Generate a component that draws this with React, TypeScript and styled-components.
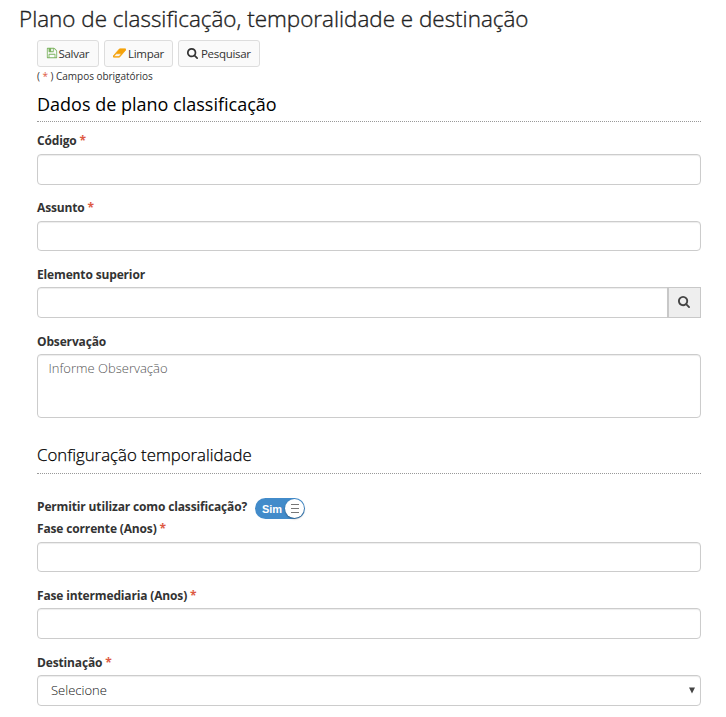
import React from "react";
import styled, { createGlobalStyle } from "styled-components";

const Global = createGlobalStyle`
  *{box-sizing:border-box}
  body{margin:0;background:#fff;font-family:"Open Sans",sans-serif;font-size:13px;color:#333;overflow:hidden}
`;
const Page = styled.main`width:726px;height:717px;padding:0 25px 0 37px;`;
const Title = styled.h1`
  margin:0 0 0 -18px;font-size:22.45px;font-weight:300;line-height:37px;height:39px;white-space:nowrap;color:#222;
  -webkit-text-stroke:.35px #222;
`;
const Toolbar = styled.div`display:flex;gap:5px;height:28px;margin-top:1px;`;
const Button = styled.button<{ $w: number; $gap: number }>`
  width:${p => p.$w}px;height:27px;padding:0 0 1px 8px;display:flex;align-items:center;gap:${p => p.$gap}px;
  border:1px solid #ddd;border-radius:3px;background:#fafafa;
  font:11.5px "Open Sans",sans-serif;color:#333;letter-spacing:-.3px;
`;
const Note = styled.p`margin:0;height:18px;line-height:16px;font-size:10px;letter-spacing:-.03px;`;
const Star = styled.span`color:#dd5a43;`;
const Heading = styled.h2<{ $h: number; $size: number; $light?: boolean }>`
  margin:0;height:${p => p.$h}px;line-height:36px;font-size:${p => p.$size}px;font-weight:${p => p.$light ? 300 : 400};
  color:#000;border-bottom:1px dotted #999;-webkit-text-stroke:${p => p.$light ? ".25px #000" : "0"};
`;
const Field = styled.div<{ $top: number }>`margin-top:${p => p.$top}px;`;
const Label = styled.label<{ $h?: number }>`
  display:block;height:${p => p.$h ?? 22}px;line-height:18px;font-size:12px;font-weight:700;letter-spacing:-.15px;
`;
const Input = styled.input<{ $h?: number }>`
  display:block;width:100%;height:${p => p.$h ?? 31}px;padding:0 11px;border:1px solid #ccc;border-radius:4px;
  background:#fff;box-shadow:inset 0 1px 1px rgba(0,0,0,.075);outline:none;
`;
const TextArea = styled.textarea`
  display:block;width:100%;height:64px;padding:4px 10.5px;border:1px solid #ccc;border-radius:4px;resize:none;
  box-shadow:inset 0 1px 1px rgba(0,0,0,.075);font:300 13px/18px "Open Sans",sans-serif;outline:none;
  &::placeholder{color:#555;opacity:1}
`;
const InputGroup = styled.div`display:flex;`;
const GroupInput = styled(Input)`flex:1;width:auto;border-radius:4px 0 0 4px;`;
const Addon = styled.button`
  width:34px;height:31px;margin-left:-1px;padding:0 1px 2px 0;display:flex;align-items:center;justify-content:center;
  border:1px solid #c8c8c8;border-left-width:2px;background:#eee;color:#444;
`;
const SwitchRow = styled.div`display:flex;height:22px;margin-top:24px;`;
const Switch = styled.button`
  width:50px;height:21px;margin-left:8px;padding:0 1px 0 7px;display:flex;align-items:center;justify-content:space-between;
  border:0;border-radius:11px;background:#428bca;color:#fff;font:bold 11px "Liberation Sans",sans-serif;letter-spacing:-.1px;
`;
const Knob = styled.span`
  width:19px;height:19px;padding-bottom:1px;display:flex;flex-direction:column;align-items:center;justify-content:center;gap:3px;
  border-radius:50%;background:#fff;box-shadow:0 1px 2px rgba(0,0,0,.35);
`;
const Grip = styled.i`width:8px;height:1px;background:#777;`;
const Select = styled.button`
  width:100%;height:31px;padding:0 5px 1px 13px;display:flex;align-items:center;justify-content:space-between;
  border:1px solid #ccc;border-radius:4px;background:#fff;box-shadow:inset 0 1px 1px rgba(0,0,0,.075);
  font:300 13px "Open Sans",sans-serif;color:#111;
`;

const FloppyIcon = () => (
  <svg width="12" height="12" viewBox="0 0 1792 1792" fill="#7bb35f"><path d="M512 1536h768v-384h-768v384zm896 0h128v-896q0-14-10-38.5t-20-34.5l-281-281q-10-10-34-20t-39-10v416q0 40-28 68t-68 28h-576q-40 0-68-28t-28-68v-416h-128v1280h128v-416q0-40 28-68t68-28h832q40 0 68 28t28 68v416zm-384-928v-320q0-13-9.5-22.5t-22.5-9.5h-192q-13 0-22.5 9.5t-9.5 22.5v320q0 13 9.5 22.5t22.5 9.5h192q13 0 22.5-9.5t9.5-22.5zm640 32v928q0 40-28 68t-68 28h-1344q-40 0-68-28t-28-68v-1344q0-40 28-68t68-28h928q40 0 88 20t76 48l280 280q28 28 48 76t20 88z" /></svg>
);
const EraserIcon = () => (
  <svg width="13" height="12" viewBox="0 0 1920 1792" fill="#f5a20a" stroke="#f5a20a" strokeWidth="90"><path d="M896 1408l336-384h-768l-336 384h768zM1909 331q15 34 9.5 71.5t-30.5 65.5l-896 1024q-38 44-96 44h-768q-38 0-69.5-20.5t-47.5-54.5q-15-34-9.5-71.5t30.5-65.5l896-1024q38-44 96-44h768q38 0 69.5 20.5t47.5 54.5z" /></svg>
);
const SearchIcon = ({ size }: { size: number }) => (
  <svg width={size} height={size} viewBox="64 128 1664 1664" fill="currentColor"><path d="M1216 832q0-185-131.5-316.5t-316.5-131.5-316.5 131.5-131.5 316.5 131.5 316.5 316.5 131.5 316.5-131.5 131.5-316.5zm512 832q0 52-38 90t-90 38q-54 0-90-38l-343-342q-179 124-399 124-143 0-273.5-55.5t-225-150-150-225-55.5-273.5 55.5-273.5 150-225 225-150 273.5-55.5 273.5 55.5 225 150 150 225 55.5 273.5q0 220-124 399l343 343q37 37 37 90z" /></svg>
);
const ArrowIcon = () => <svg width="6" height="7" viewBox="0 0 6 7"><path d="M0 .5h6L3 6.5z" fill="#444" /></svg>;

export default function App() {
  return <><Global /><Page>
    <Title>Plano de classificação, temporalidade e destinação</Title>
    <Toolbar>
      <Button $w={62} $gap={0.5}><FloppyIcon />Salvar</Button>
      <Button $w={69} $gap={2}><EraserIcon />Limpar</Button>
      <Button $w={82} $gap={3}><SearchIcon size={11} />Pesquisar</Button>
    </Toolbar>
    <Note>( <Star>*</Star> ) Campos obrigatórios</Note>
    <Heading $h={36} $size={18}>Dados de plano classificação</Heading>
    <Field $top={10}><Label>Código <Star>*</Star></Label><Input /></Field>
    <Field $top={14}><Label>Assunto <Star>*</Star></Label><Input $h={30} /></Field>
    <Field $top={15}><Label $h={21}>Elemento superior</Label>
      <InputGroup><GroupInput /><Addon aria-label="Pesquisar"><SearchIcon size={12} /></Addon></InputGroup>
    </Field>
    <Field $top={15}><Label $h={21}>Observação</Label><TextArea placeholder="Informe Observação" /></Field>
    <Field $top={19}><Heading $h={37} $size={16.8} $light>Configuração temporalidade</Heading></Field>
    <SwitchRow><Label>Permitir utilizar como classificação?</Label>
      <Switch role="switch" aria-checked="true">Sim<Knob><Grip /><Grip /><Grip /></Knob></Switch>
    </SwitchRow>
    <Field $top={0}><Label>Fase corrente (Anos) <Star>*</Star></Label><Input $h={30} /></Field>
    <Field $top={15}><Label $h={21}>Fase intermediaria (Anos) <Star>*</Star></Label><Input /></Field>
    <Field $top={15}><Label $h={21}>Destinação <Star>*</Star></Label><Select>Selecione<ArrowIcon /></Select></Field>
  </Page></>;
}
